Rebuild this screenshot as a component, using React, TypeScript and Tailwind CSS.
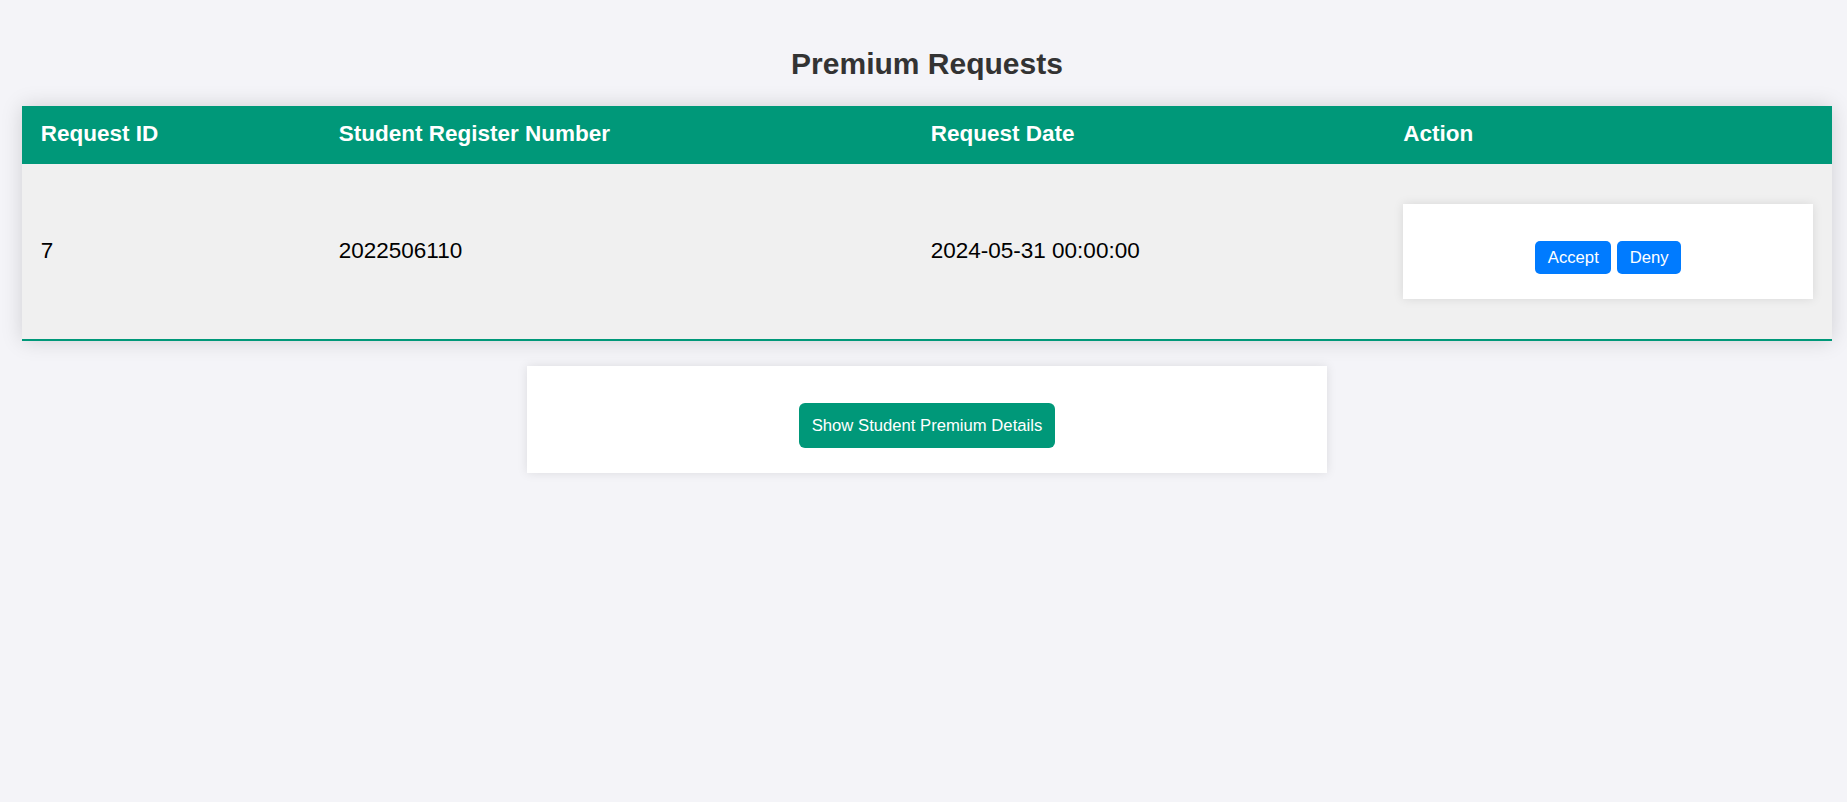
import React from 'react';

const requests = [
  { id: 7, regNo: '2022506110', date: '2024-05-31 00:00:00' },
];

export default function App() {
  return (
    <div className="min-h-screen bg-[#f4f4f8] pl-[7px] pt-[47px] font-['Liberation_Sans',Arial,sans-serif]">
      <h2 className="text-center text-[30px] leading-[34px] font-bold text-[#333333]">Premium Requests</h2>

      {/* Requests table */}
      <div className="mx-auto mt-[25px] w-[1810px] shadow-[0_0_20px_rgba(0,0,0,0.15)]">
        <div className="grid grid-cols-[298px_592px_472.5px_447.5px] bg-[#009879] text-white text-[22.5px] font-bold leading-[26px]">
          <div className="px-[18.75px] pt-[15px] pb-[17px]">Request ID</div>
          <div className="px-[18.75px] pt-[15px] pb-[17px]">Student Register Number</div>
          <div className="px-[18.75px] pt-[15px] pb-[17px]">Request Date</div>
          <div className="px-[18.75px] pt-[15px] pb-[17px]">Action</div>
        </div>
        {requests.map((r) => (
          <div
            key={r.id}
            className="grid h-[177px] grid-cols-[298px_592px_472.5px_447.5px] items-center border-b-2 border-[#009879] bg-[#f0f0f0] text-[22.5px] leading-[26px] text-black"
          >
            <div className="px-[18.75px] pb-[2px]">{r.id}</div>
            <div className="px-[18.75px] pb-[2px]">{r.regNo}</div>
            <div className="px-[18.75px] pb-[2px]">{r.date}</div>
            <div className="px-[18.75px]">
              <div className="flex justify-center gap-[6px] bg-white pt-[37px] pb-[25px] shadow-[0_0_10px_rgba(0,0,0,0.1)]">
                <button className="flex h-[33px] items-center rounded-[5px] bg-[#007bff] px-[12.5px] text-[16.67px] text-white">
                  Accept
                </button>
                <button className="flex h-[33px] items-center rounded-[5px] bg-[#007bff] px-[12.5px] text-[16.67px] text-white">
                  Deny
                </button>
              </div>
            </div>
          </div>
        ))}
      </div>

      {/* Details card */}
      <div className="mx-auto mt-[25px] flex w-[800px] justify-center bg-white pt-[37px] pb-[25px] shadow-[0_0_10px_rgba(0,0,0,0.1)]">
        <button className="rounded-[6px] bg-[#009879] px-[12.5px] py-[12.5px] text-[16.67px] leading-[20px] text-white">
          Show Student Premium Details
        </button>
      </div>
    </div>
  );
}
